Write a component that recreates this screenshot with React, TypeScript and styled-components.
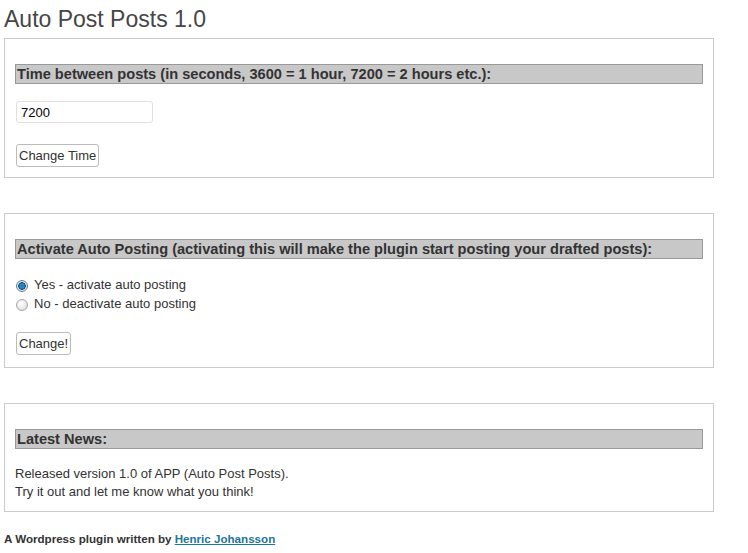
import React from "react";
import styled, { createGlobalStyle } from "styled-components";

const Global = createGlobalStyle`
  html, body { margin: 0; padding: 0; background: #fff; }
  body { font-family: "Liberation Sans", Arial, sans-serif; color: #333; }
`;

const Page = styled.div`
  width: 710px;
  padding: 5px 0 0 4px;
`;

const Title = styled.h2`
  margin: 0 0 5px 0;
  font-size: 23px;
  line-height: 28px;
  font-weight: normal;
  color: #464646;
`;

const Panel = styled.div<{ $gap?: number }>`
  border: 1px solid #cacaca;
  padding: 25px 10px 10px 10px;
  margin-bottom: ${(p) => p.$gap ?? 35}px;
`;

const Bar = styled.h3`
  margin: 0;
  height: 18px;
  line-height: 18px;
  padding-left: 1px;
  background: #c8c8c8;
  border: 1px solid #999;
  font-size: 14.6px;
  font-weight: bold;
  color: #333;
  white-space: nowrap;
`;

const TextInput = styled.input`
  display: block;
  box-sizing: border-box;
  width: 137px;
  height: 22px;
  margin: 17px 0 0 1px;
  padding: 0 4px;
  border: 1px solid #dfdfdf;
  border-radius: 3px;
  font-family: "Liberation Sans", Arial, sans-serif;
  font-size: 13px;
  color: #000;
  outline: none;
`;

const Button = styled.button<{ $top: number; $bottom?: number }>`
  display: block;
  box-sizing: border-box;
  height: 23px;
  margin: ${(p) => p.$top}px 0 ${(p) => p.$bottom ?? 0}px 1px;
  padding: 0 2px;
  background: #fff;
  border: 1px solid #bbb;
  border-radius: 3px;
  font-family: "Liberation Sans", Arial, sans-serif;
  font-size: 13px;
  color: #333;
`;

const RadioList = styled.div`
  display: flex;
  flex-direction: column;
  margin-top: 16px;
`;

const RadioRow = styled.label`
  display: flex;
  align-items: center;
  height: 19px;
  font-size: 13px;
  color: #333;
`;

const RadioDot = styled.span<{ $on?: boolean }>`
  box-sizing: border-box;
  width: 12px;
  height: 12px;
  margin: 2px 6px 0 1px;
  border-radius: 50%;
  border: 1px solid ${(p) => (p.$on ? "#6f7f8a" : "#a5a5a5")};
  background: ${(p) =>
    p.$on
      ? "radial-gradient(circle at 50% 50%, #1d6fa8 0, #2b8ed0 2px, #0d4e7d 3.5px, #d8dde2 4px, #f4f4f4 100%)"
      : "radial-gradient(circle at 40% 35%, #ffffff 0, #e8e8e8 60%, #cfcfcf 100%)"};
`;

const NewsText = styled.p`
  margin: 16px 0 0 0;
  font-size: 13px;
  line-height: 18px;
  color: #333;
`;

const Footer = styled.p`
  margin: 0;
  font-size: 11.6px;
  font-weight: bold;
  color: #333;
`;

const Link = styled.a`
  color: #21759b;
  text-decoration: underline;
`;

export default function App() {
  return (
    <>
      <Global />
      <Page>
        <Title>Auto Post Posts 1.0</Title>
        <Panel>
          <Bar>Time between posts (in seconds, 3600 = 1 hour, 7200 = 2 hours etc.):</Bar>
          <TextInput defaultValue="7200" />
          <Button $top={21}>Change Time</Button>
        </Panel>
        <Panel>
          <Bar>Activate Auto Posting (activating this will make the plugin start posting your drafted posts):</Bar>
          <RadioList>
            <RadioRow>
              <RadioDot $on />
              Yes - activate auto posting
            </RadioRow>
            <RadioRow>
              <RadioDot />
              No - deactivate auto posting
            </RadioRow>
          </RadioList>
          <Button $top={19} $bottom={2}>Change!</Button>
        </Panel>
        <Panel $gap={20}>
          <Bar>Latest News:</Bar>
          <NewsText>
            Released version 1.0 of APP (Auto Post Posts).
            <br />
            Try it out and let me know what you think!
          </NewsText>
        </Panel>
        <Footer>
          A Wordpress plugin written by <Link href="#">Henric Johansson</Link>
        </Footer>
      </Page>
    </>
  );
}
